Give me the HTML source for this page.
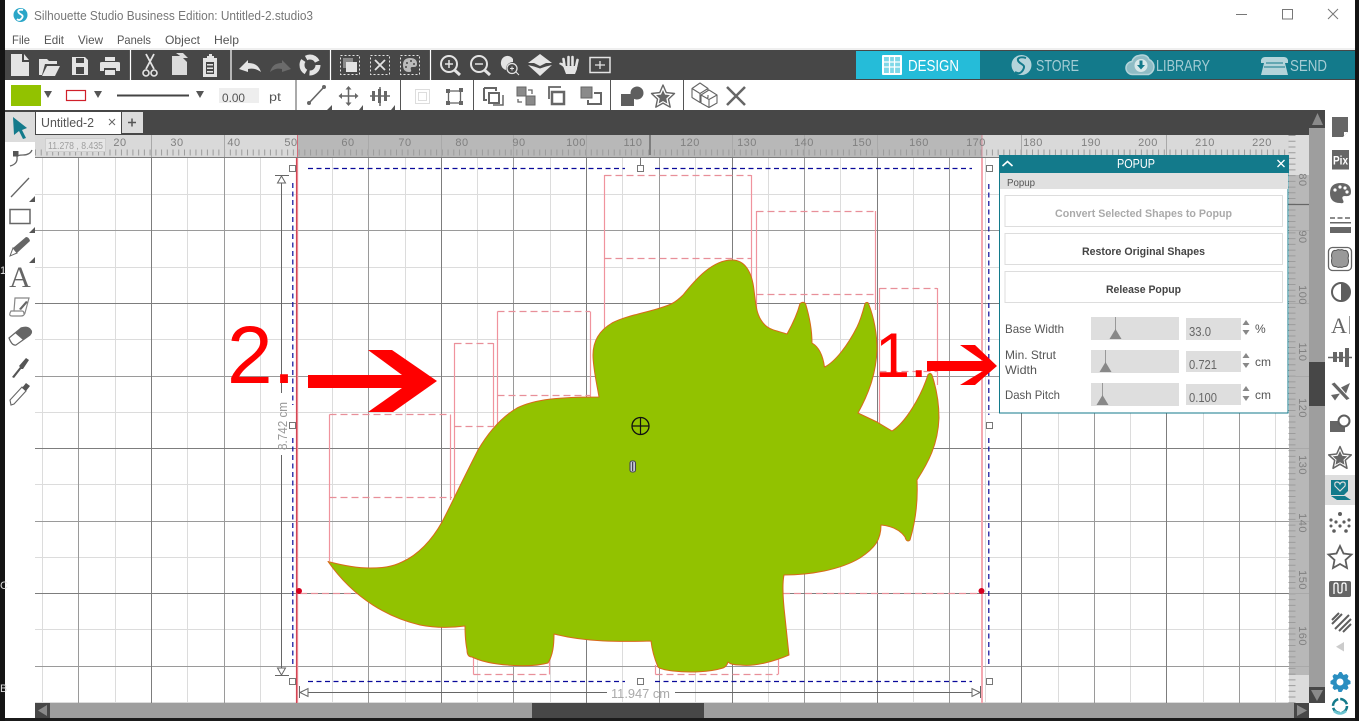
<!DOCTYPE html>
<html><head><meta charset="utf-8"><title>Silhouette Studio</title>
<style>html,body{margin:0;padding:0;background:#fff;overflow:hidden}svg{display:block}text{font-family:"Liberation Sans",sans-serif}</style></head>
<body>
<svg xmlns="http://www.w3.org/2000/svg" width="1359" height="721" viewBox="0 0 1359 721">
<rect width="1359" height="721" fill="#fff"/>

<!-- canvas grid -->
<g fill="none">
<path stroke="#dcdcdc" d="M42.5 158V703M115.5 158V703M187.5 158V703M260.5 158V703M332.5 158V703M405.5 158V703M477.5 158V703M550.5 158V703M622.5 158V703M695.5 158V703M768.5 158V703M840.5 158V703M913.5 158V703M985.5 158V703M1058.5 158V703M1130.5 158V703M1203.5 158V703M1275.5 158V703M35 194.5H1289M35 267.5H1289M35 339.5H1289M35 412.5H1289M35 484.5H1289M35 557.5H1289M35 629.5H1289M35 702.5H1289"/>
<path stroke="#9a9a9a" d="M78.5 158V703M224.5 158V703M368.5 158V703M513.5 158V703M659.5 158V703M804.5 158V703M949.5 158V703M1094.5 158V703M1239.5 158V703M35 230.5H1289M35 376.5H1289M35 521.5H1289M35 666.5H1289"/>
<path stroke="#7d7d7d" d="M151.5 158V703M296.5 158V703M441.5 158V703M586.5 158V703M732.5 158V703M877.5 158V703M1021.5 158V703M1166.5 158V703M35 303.5H1289M35 448.5H1289M35 593.5H1289"/>
</g>

<!-- popup struts -->
<g fill="none" stroke="#f0939d" stroke-width="1.2">
<path d="M329.5 561V414.5M450.5 414.5V500M454.5 343V498M493.5 343V427M497.5 311.5V425M590.5 311.5V397M604.5 175V330M751.5 175V300M756.5 211V330M875.5 211V310M879.5 288V425M937.5 288V385M473.5 655V674.5M549.5 660V674.5M655.5 665V674.5M778.5 655V674.5"/>
<path stroke-dasharray="7 4" stroke="#e88f99" d="M329.5 414.5H450M329.5 497.5H452M454.5 343.5H493M454.5 426.5H493M497.5 311.5H590M497.5 395.5H590M604.5 175.5H751M604.5 258.5H751M756.5 211.5H875M756.5 294.5H875M879.5 288.5H937M879.5 371.5H937M473.5 674.5H549M655.5 674.5H778M300 593.5H410M783 593.5H980"/>
<path stroke-width="2" stroke="#f4a8b0" d="M982 158V703"/>
</g>
<path stroke="#f4a8b0" stroke-width="2.400" fill="none" d="M297 158V703"/>
<path stroke="#cf3a4a" stroke-width="1.200" fill="none" d="M296.700 158V703"/>

<!-- blue selection -->
<g fill="none" stroke="#0a0a9a" stroke-width="1.2" stroke-dasharray="5 3.5">
<path d="M308 168.5H625M655 168.5H972M308 681.5H625M655 681.5H972M292.8 183V405M292.8 438V664M988.8 184V415M988.8 438V664"/>
</g>
<g fill="#fff" stroke="#777">
<rect x="289.5" y="165.5" width="6" height="6"/><rect x="637.5" y="165.5" width="6" height="6"/><rect x="986.5" y="165.5" width="6" height="6"/>
<rect x="289.500" y="422.5" width="6" height="6"/><rect x="986.5" y="422.5" width="6" height="6"/>
<rect x="289.5" y="678.5" width="6" height="6"/><rect x="637.5" y="678.5" width="6" height="6"/><rect x="986.5" y="678.5" width="6" height="6"/>
</g>
<path d="M640.5 157V165" stroke="#777"/>

<!-- dimensions -->
<g fill="none" stroke="#666">
<path d="M281.5 182V393M281.5 455V668M275 175.5H289M275 675.5H289M299.5 686V698M980.5 686V698M308 692.5H607M675 692.5H972"/>
<path fill="#fff" d="M281.5 176l-4 7h8zM281.5 675l-4-7h8zM300 692.5l8-4v8zM980 692.5l-8-4v8z"/>
</g>
<text x="0" y="0" transform="translate(287,426) rotate(-90)" text-anchor="middle" font-size="12.500" fill="#999" textLength="48" lengthAdjust="spacingAndGlyphs">8.742 cm</text>
<text x="611" y="698" font-size="13" fill="#aaa" textLength="59" lengthAdjust="spacingAndGlyphs">11.947 cm</text>

<!-- dinosaur -->
<path fill="#92c200" stroke="#d8691a" stroke-width="1" stroke-linejoin="round" d="M328 561.5C345 566 358 568 370 568C382 568 392 567 402 562C418 555 432 540 442 522C450 507 460 485 478 450C488 433 500 418 517 408C535 399 560 397 599 397C597 385 593 368 593 355C593 340 600 330 612 323C625 316 645 313 660 308C670 305 675 303 683 295C695 280 712 260 732 260C745 260 752 272 754 290C756 305 756 316 765 325C770 330 778 331 787 334C792 325 797 315 800 303.5C802 302 804 302 805.5 303.5C809 315 812 328 812 343C819 347 823 356 824.5 367C835 362 848 345 857 327C861 319 863 311 865 303.5C866 302 868 302 868.5 303.5C875 320 877 335 877 350C876 375 868 395 858 413L877 422L892 431C905 423 921 397 928 374.5C930 373 931 373 932 375C937 390 939 403 939 418C938 445 928 463 917 480C918 500 916 520 910 540C908 542 906 541 905 537C900 530 892 526 881 525C881 540 875 548 860 558C840 570 810 575 784 575C782 585 783 600 785 617L789 655C775 661 755 667 740 665C735 665 730 664 728 662C727 666 725 667 723 668C710 672 690 673 673 671C665 670 660 669 658 667C655 660 652 650 651 641C620 642 585 642 554 634C554 645 553 655 548 663C530 668 490 666 472 657C469 657 467 655 467 650C465 640 465 632 465 626C450 628 435 628 420 625C390 618 355 600 328 561.5Z"/>
<circle cx="640.5" cy="426" r="8.5" fill="none" stroke="#111" stroke-width="1.3"/><path d="M632 426H649M640.5 417.5V434.5" stroke="#111" stroke-width="1.2"/>
<rect x="630" y="461" width="5.5" height="11" rx="2" fill="#ccd" stroke="#445" stroke-width="1.1"/><path d="M632.7 462V471" stroke="#223"/>
<circle cx="299" cy="591" r="3" fill="#d5001f"/><circle cx="981.5" cy="591" r="3" fill="#d5001f"/>

<!-- rulers -->
<rect x="35" y="135" width="263" height="22" fill="#d9d9d9"/>
<rect x="298" y="135" width="684" height="22" fill="#b8b8b8"/>
<rect x="982" y="135" width="307" height="22" fill="#d9d9d9"/>
<rect x="35" y="157" width="1254" height="1" fill="#7d7d7d"/>
<path d="M35 152.5H1289" stroke="#9c9c9c" stroke-width="6" stroke-dasharray="1 4.73" fill="none"/>
<path d="M151.5 135V157M224.5 135V157M368.5 135V157M441.5 135V157M513.5 135V157M586.5 135V157M732.5 135V157M804.5 135V157M877.5 135V157M1021.5 135V157M1166.5 135V157" stroke="#a9a9a9"/>
<path d="M650 135V155" stroke="#666" stroke-width="1.4"/><path d="M297.5 135V157" stroke="#d56a78"/><path d="M982 135V157" stroke="#d58a98"/>
<rect x="45.5" y="138.5" width="60" height="13" fill="#e6e6e6" stroke="#cfcfcf"/>
<text x="48" y="149" font-size="10" fill="#a0a0a0" textLength="55" lengthAdjust="spacingAndGlyphs">11.278 , 8.435</text>
<g font-size="11" fill="#808080" text-anchor="middle" letter-spacing=".5">
<text x="120" y="146">20</text><text x="177" y="146">30</text><text x="234" y="146">40</text><text x="291" y="146">50</text><text x="348" y="146">60</text><text x="405" y="146">70</text><text x="462" y="146">80</text><text x="519" y="146">90</text><text x="576" y="146">100</text><text x="633" y="146">110</text><text x="690" y="146">120</text><text x="747" y="146">130</text><text x="804" y="146">140</text><text x="862" y="146">150</text><text x="919" y="146">160</text><text x="976" y="146">170</text><text x="1033" y="146">180</text><text x="1091" y="146">190</text><text x="1148" y="146">200</text><text x="1205" y="146">210</text><text x="1262" y="146">220</text>
</g>
<rect x="1289" y="135" width="20" height="40" fill="#dcdcdc"/>
<rect x="1289" y="175" width="20" height="500" fill="#b8b8b8"/>
<rect x="1289" y="675" width="20" height="28" fill="#dcdcdc"/>
<path d="M1292 135V703" stroke="#9c9c9c" stroke-width="7" stroke-dasharray="1 4.73" fill="none"/>
<path d="M1288 204.5H1309" stroke="#666" stroke-width="1.3"/>
<path d="M1289 230.5H1309M1289 303.5H1309M1289 376.5H1309M1289 448.5H1309M1289 521.5H1309M1289 593.5H1309M1289 666.5H1309" stroke="#a9a9a9"/>
<g font-size="11" fill="#808080" text-anchor="middle" letter-spacing=".5">
<text transform="translate(1299,180) rotate(90)">80</text><text transform="translate(1299,237) rotate(90)">90</text><text transform="translate(1299,295) rotate(90)">100</text><text transform="translate(1299,352) rotate(90)">110</text><text transform="translate(1299,408) rotate(90)">120</text><text transform="translate(1299,465) rotate(90)">130</text><text transform="translate(1299,523) rotate(90)">140</text><text transform="translate(1299,580) rotate(90)">150</text><text transform="translate(1299,636) rotate(90)">160</text>
</g>

<!-- window chrome -->
<rect y="48" x="0" width="1359" height="2" fill="#efefef"/>
<rect x="0" y="50" width="1359" height="30" fill="#474747"/>
<rect x="0" y="80" width="1359" height="30" fill="#fff"/>
<rect x="0" y="110" width="1325" height="25" fill="#474747"/>

<!-- scrollbars -->
<rect x="1309" y="128" width="16" height="575" fill="#9e9e9e"/>
<rect x="1309" y="362" width="16" height="44" fill="#474747"/>
<rect x="1309" y="687" width="16" height="16" fill="#474747"/><path d="M1311 690h12l-6 11z" fill="#8a8a8a"/>
<rect x="35" y="703" width="1259" height="15" fill="#9e9e9e"/>
<rect x="532" y="703" width="172" height="15" fill="#474747"/>
<rect x="35" y="703" width="15" height="15" fill="#474747"/><path d="M47 705v11l-9-5.500z" fill="#8a8a8a"/>
<rect x="1294" y="703" width="15" height="15" fill="#474747"/><path d="M1297 705v11l10-5.500z" fill="#8a8a8a"/>
<rect x="1309" y="703" width="16" height="15" fill="#fff"/>

<rect x="5" y="112" width="30" height="596" fill="#fff"/>
<rect x="5" y="112" width="30" height="30" fill="#dcdcdc"/>
<rect x="36" y="112" width="85" height="22" fill="#fff"/>
<rect x="122" y="112" width="21" height="21" fill="#dcdcdc"/>
<rect x="1325" y="110" width="30" height="608" fill="#fff"/>
<rect x="0" y="718" width="1359" height="3" fill="#1b1b1b"/>
<rect x="5" y="708" width="30" height="10" fill="#fff"/>
<rect x="0" y="0" width="5" height="721" fill="#141414"/>
<rect x="1355" y="0" width="4" height="721" fill="#141414"/>
<g font-size="11" fill="#ddd"><text x="0" y="274" textLength="4">1.</text><text x="0" y="589">C</text><text x="0" y="692">B</text></g>

<!-- title -->
<circle cx="20.500" cy="15" r="7" fill="#2aa6c8"/><path d="M23 10c-4-1-6 1-4 3s5 2 3 5-4 2-5 1" fill="none" stroke="#fff" stroke-width="1.800"/>
<text x="34" y="20" font-size="13" fill="#777" textLength="279" lengthAdjust="spacingAndGlyphs">Silhouette Studio Business Edition: Untitled-2.studio3</text>
<path d="M1236 14.500h11" stroke="#777"/><rect x="1282.500" y="9.500" width="10" height="9.500" fill="none" stroke="#777"/><path d="M1328 9l10 10M1338 9l-10 10" stroke="#777"/>
<g font-size="12" fill="#555">
<text x="12" y="44" textLength="18" lengthAdjust="spacingAndGlyphs">File</text><text x="44" y="44" textLength="20" lengthAdjust="spacingAndGlyphs">Edit</text><text x="78" y="44" textLength="25" lengthAdjust="spacingAndGlyphs">View</text><text x="117" y="44" textLength="34" lengthAdjust="spacingAndGlyphs">Panels</text><text x="165" y="44" textLength="35" lengthAdjust="spacingAndGlyphs">Object</text><text x="214" y="44" textLength="25" lengthAdjust="spacingAndGlyphs">Help</text>
</g>

<!-- nav -->
<rect x="856" y="51" width="499" height="28" fill="#137a8b"/>
<rect x="856" y="51" width="124" height="28" fill="#25bcd9"/>
<rect x="882" y="55" width="20" height="20" rx="1" fill="#fff"/><path d="M884 57h16v16h-16z" fill="#7fd8e8"/><path d="M889.500 57v16M894.500 57v16M884 62h16M884 67h16" stroke="#fff" stroke-width="1.200"/>
<text x="908" y="71" font-size="16" fill="#fff" textLength="51" lengthAdjust="spacingAndGlyphs">DESIGN</text>
<circle cx="1021.500" cy="65" r="10" fill="#b4d4da"/><path d="M1026 58c-7-2-10 1-7 4s7 3 4 8-6 3-8 2" fill="none" stroke="#137a8b" stroke-width="2"/>
<text x="1036" y="71" font-size="16" fill="#a4ccd4" textLength="43" lengthAdjust="spacingAndGlyphs">STORE</text>
<path d="M1133 74.500a6.500 6.500 0 0 1-1-13 8 8 0 0 1 7-6c5-1.500 9 .5 10 4a8 8 0 0 1-.5 15z" fill="#8fbcc5" stroke="#b4d4da" stroke-width="1.500"/><circle cx="1141" cy="65.500" r="6.500" fill="#d8e8ea"/><path d="M1139.500 60.500h3v4.500h2.500l-4 4.500-4-4.500h2.500z" fill="#137a8b"/>
<text x="1156" y="71" font-size="16" fill="#a4ccd4" textLength="54" lengthAdjust="spacingAndGlyphs">LIBRARY</text>
<path d="M1261 60q1-3 4-3h19q3 0 4 3v3h-3l3 12h-27l3-12h-3z" fill="#b4d4da"/><path d="M1266 63h17M1264 67h21" stroke="#137a8b"/>
<text x="1290" y="71" font-size="16" fill="#a4ccd4" textLength="37" lengthAdjust="spacingAndGlyphs">SEND</text>

<!-- toolbar 1 -->
<path d="M130.500 50v30M231 50v30M330.500 50v30M430.500 50v30" stroke="#fff" stroke-width="1.200"/>
<g fill="#e4e4e4">
<path d="M11 54h11v8h7v14H11zM24 54l5 6h-5z"/>
<path d="M39 59h8l2 2h8v3H45l-3 11h-3zM47 66h13l-5 10H42z"/>
<path fill-rule="evenodd" d="M72 57h13l3 3v15H72zM76 58v5h8v-5zM76 67v7h8v-7z"/>
<path d="M105 57h10v4h-10zM100 63q0-1 2-1h16q2 0 2 1v8h-4v-3h-12v3h-4zM105 70h10v5h-10z"/>
<path d="M172 56h9l6 6v13h-15z M176 53h7l5 5h-5z" opacity=".95"/>
<path fill-rule="evenodd" d="M203 58h4v-2h2v-2h3v2h2v2h3v19h-14zM206 62v12h8V62z"/><path d="M207 64h6v1.500h-6zM207 67.500h6V69h-6zM207 71h6v1.500h-6z"/>
<path d="M239 69l9-9v3c7 0 11 3 13 9-4-3-8-4-13-3v3z"/>
<path d="M291 69l-9-9v3c-7 0-10 3-12 9 4-3 7-4 12-3v3z" fill="#6b6b6b"/>
<path d="M528 63l12-9 12 9h-6l-6 3-6-3zM528 65l6 1.500 6 2 6-2 6-1.500-12 11z"/>
<path d="M564 68q-1-2-5-4l1-1.500 4 1zM563 66h14v3l-2 5h-9z"/>
</g>
<g fill="none" stroke="#e4e4e4" stroke-linecap="round" stroke-width="2.600"><path d="M564.500 66l-1-7M568.500 65v-8M572.500 65v-8M576 67l1.500-7"/></g>
<g fill="none" stroke="#e4e4e4">
<path stroke-width="1.800" d="M146 54l8 15M154 54l-8 15"/><circle cx="146" cy="73" r="3" stroke-width="1.600"/><circle cx="154" cy="73" r="3" stroke-width="1.600"/>
<circle cx="310" cy="65" r="8" stroke-width="5" stroke-dasharray="13 3.700"/>
<g stroke-dasharray="2 2"><rect x="340.500" y="55.500" width="19" height="19"/><rect x="370.500" y="55.500" width="19" height="19"/><rect x="400.500" y="55.500" width="19" height="19"/></g>
<path stroke-width="1.800" d="M375 60l10 10M385 60l-10 10"/>
<circle cx="449" cy="64" r="8" stroke-width="2"/><path stroke-width="3" d="M454.500 70l5.500 5"/><path stroke-width="1.500" d="M445 64h8M449 60v8"/>
<circle cx="479" cy="64" r="8" stroke-width="2"/><path stroke-width="3" d="M484.500 70l5.500 5"/><path stroke-width="1.500" d="M475 64h8"/>
<circle cx="512" cy="68.500" r="5" stroke-width="1.300"/><path d="M516 72l3 3M510 68.500h4M512 66.500v4"/>
<rect x="590" y="57.500" width="20" height="15" stroke-width="1.500"/><path stroke-width="1.300" d="M595 65h10M600 61v8"/>
</g>
<path d="M501 62a6.500 6.500 0 0 1 12-3v3a7 7 0 0 0-7 8 7 7 0 0 1-5-8z" fill="#e4e4e4"/>
<path d="M343 58h10v10h-10z" fill="#8a8a8a"/><path d="M346 62h11v10h-11z" fill="#e4e4e4"/>
<path d="M403 65q0-7 7-7 7 0 7 6 0 3-3 3h-2q-2 0-1 3 1 2-2 2-6 0-6-7z" fill="#bbb"/>
<g fill="#474747"><circle cx="407" cy="63" r="1"/><circle cx="411" cy="61" r="1"/><circle cx="414" cy="64" r="1"/><circle cx="406" cy="67" r="1"/></g>

<!-- toolbar 2 -->
<path d="M296 80v30M400.500 80v30M473.500 80v30M610.500 80v30M683.500 80v30" stroke="#555"/>
<rect x="11" y="85" width="30" height="21" fill="#92c200"/>
<path d="M44 91h8l-4 7zM94 91h8l-4 7zM196 91h8l-4 7z" fill="#555"/>
<rect x="66.500" y="90.500" width="19" height="10" fill="#fff" stroke="#d0202a" stroke-width="1.200"/>
<rect x="117" y="94.500" width="72" height="2" fill="#444"/>
<rect x="219" y="88" width="40" height="15" fill="#eee"/>
<text x="222" y="102" font-size="12" fill="#555" textLength="23" lengthAdjust="spacingAndGlyphs">0.00</text>
<text x="269" y="101" font-size="12" fill="#555" textLength="12" lengthAdjust="spacingAndGlyphs">pt</text>
<g fill="none" stroke="#666">
<path stroke-width="1.600" d="M309 103l15-16"/><circle cx="309" cy="103" r="1.500" fill="#666"/><circle cx="324" cy="87" r="1.500" fill="#666"/>
<path stroke-width="1.500" d="M340 96h17M348.500 88v17"/><path fill="#666" stroke="none" d="M348.500 86l-3 3.500h6zM348.500 106l-3-3.500h6zM338.500 96l3.500-3v6zM358.500 96l-3.500-3v6z"/>
<path stroke-width="1.500" d="M370 96h20M380 87v19"/><path stroke="none" fill="#666" d="M372 91h3v10h-3zM378 89h3v14h-3zM384 91h3v10h-3z" />
</g>
<path d="M327 110l5-5v5zM359 110l4-5v5zM391 110l4-5v5z" fill="#555"/>
<g fill="none" stroke="#ddd"><rect x="415.500" y="89.500" width="14" height="14"/><rect x="418.500" y="92.500" width="8" height="8"/></g>
<g fill="none" stroke="#666"><rect x="448.500" y="91" width="12" height="12" stroke-width="1.300"/></g>
<path d="M446 89h4v4h-4zM459 88h4v4h-4zM446 101h4v4h-4zM459 101h4v4h-4z" fill="#666"/>
<g fill="none" stroke="#666" stroke-width="2">
<path d="M484 88h12v3M484 88v12h3"/><rect x="489" y="93" width="10" height="10"/><path d="M493 105h10V95" stroke-width="1.500"/>
<rect x="552" y="92" width="12" height="12" stroke-width="2.500"/><path d="M549 99v-12h12" stroke-width="1.800"/>
<path d="M594 93h7v11h-13v-4"/>
</g>
<path d="M517 87h9v9h-9zM526 96h9v9h-9z" fill="#8a8a8a" stroke="#666"/><path d="M528 90h4v4M522 102h-4v-3" fill="none" stroke="#666" stroke-width="1.300"/>
<rect x="581" y="87" width="11" height="11" fill="#8a8a8a" stroke="#666"/>
<circle cx="637" cy="93" r="6.500" fill="#5e5e5e"/><path d="M621 94h13v12h-13z" fill="#5e5e5e"/>
<path d="M663 85l3.300 7.600 8.200.9-6 5.600 1.700 8.100-7.200-4.100-7.200 4.100 1.700-8.100-6-5.600 8.200-.9z" fill="#fff" stroke="#666" stroke-width="1.400" stroke-linejoin="round"/>
<path d="M663 90l2 4.600 5 .5-3.700 3.400 1 5-4.300-2.500-4.300 2.500 1-5-3.700-3.400 5-.5z" fill="#666"/>
<g fill="#fff" stroke="#666" stroke-width="1.100" stroke-linejoin="round"><path d="M692 88.500l8-5.500 8 5.500v9l-8 5-8-5zM692 88.500l8 5 8-5M700 93.500v9"/><path d="M701 95l8-5 8 5v8l-8 4.500-8-4.500zM701 95l8 4.500 8-4.500M709 99.500v8"/></g>
<path d="M727 87l18 18M745 87l-18 18" stroke="#666" stroke-width="2.500"/>

<!-- tabs -->
<text x="41" y="127" font-size="12.500" fill="#555" textLength="53" lengthAdjust="spacingAndGlyphs">Untitled-2</text>
<path d="M109 119l6 6M115 119l-6 6" stroke="#666"/>
<path d="M128 122.500h8M132 118.500v8" stroke="#555" stroke-width="1.500"/>
<path d="M1312 125h11l-5.500-12z" fill="#8a8a8a"/>

<!-- left tools -->
<path d="M13 117l14 11-5 2 4 8-3 1-4-8-5 4z" fill="#137a8b"/>
<g fill="none" stroke="#666">
<path stroke-width="1.300" d="M10 166q8-2 7-9 0-2 6-2 7 0 9-5"/><rect x="13" y="151" width="5.500" height="5.500" fill="#555" stroke="none"/>
<path stroke-width="1.300" d="M11 197l18-19"/>
<rect x="10" y="209.500" width="20" height="14" stroke-width="1.500"/>
</g>
<path d="M35 196v6h-6zM35 227v6h-6zM35 257v6h-6z" fill="#555"/>
<path d="M10 256l3-8 13-11q3 0 4 4l-13 12z" fill="#666"/><path d="M10 256l3-8 4 5z" fill="#fff" stroke="#666"/>
<text x="20" y="287" font-size="30" fill="#666" text-anchor="middle" style="font-family:'Liberation Serif',serif">A</text>
<g fill="none" stroke="#888" stroke-width="1.200"><path d="M15 298h14l-4 15q-1 3-4 3H12q-3 0-2-3l1-2h3z"/><path d="M14 311h8q2 0 2 3"/></g><path d="M19 309l7-8 2 1-7 8z" fill="#666"/>
<path d="M9 338l12-10q6-2 9 1t0 6l-14 10q-4 1-7-7z" fill="#fff" stroke="#666" stroke-width="1.200"/><path d="M15 333l6-5q6-2 9 1t0 6l-7 5z" fill="#666"/>
<path d="M12 377l8-10-1-1 7-8 3 2-6 9-2 0-7 9z" fill="#555"/>
<path d="M11 405l-1-5 12-13 4 4-12 13z" fill="#fff" stroke="#666" stroke-width="1.100"/><path d="M22 388l4-5 4 3-4 5z" fill="#555"/>

<!-- right tools -->
<g fill="#666">
<path d="M1332 117h16v15l-5 5h-11z"/><path d="M1344 136l4-4h-4z" fill="#fff"/>
<rect x="1332" y="150" width="17" height="19.500"/>
<text x="1340.500" y="164.500" font-size="12" fill="#fff" font-weight="bold" text-anchor="middle" textLength="15" lengthAdjust="spacingAndGlyphs">Pix</text>
<path d="M1330 193q0-10 11-10 10 0 10 9 0 5-6 4-4 0-2 4t-3 3q-10 0-10-10z"/>
<rect x="1330" y="222" width="21" height="1.500"/><rect x="1330" y="227" width="21" height="6"/>
<path d="M1333 352h4v10h-4zM1339 352h4v10h-4zM1345 348h4v19h-4z"/>
<path d="M1350 383l-9 4.500 5 6zM1331 395l9-1.500-5 7zM1331.500 384l3-1.500 15 16-3 1.500z"/>
<rect x="1330" y="421" width="15" height="11"/>
<rect x="1329" y="581" width="22" height="16" rx="2"/>
</g>
<path d="M1330 218h21" stroke="#666" stroke-width="1.500" stroke-dasharray="5 2.500"/>
<g fill="#fff"><circle cx="1335" cy="190" r="1.600"/><circle cx="1340" cy="187" r="1.600"/><circle cx="1345" cy="188" r="1.600"/><circle cx="1347" cy="192" r="1.600"/></g>
<rect x="1328.500" y="247.500" width="23" height="23" rx="4" fill="none" stroke="#666" stroke-width="1.300"/>
<path d="M1332 253q1-3 4-2.500 2-1.500 4-.5 2-1 4 .5 3-.5 4 2.500 1 3 0 5 1 3 0 6-1 3-4 2.500-2 1.500-4 .5-2 1-4-.5-3 .5-4-2.500-1-3 0-6-1-2 0-5z" fill="#999" stroke="#555" stroke-width="1"/>
<circle cx="1341" cy="292" r="9" fill="none" stroke="#5e5e5e" stroke-width="2"/><path d="M1341 283a9 9 0 0 1 0 18z" fill="#5e5e5e"/>
<text x="1331" y="333" font-size="22" fill="#666" style="font-family:'Liberation Serif',serif">A</text><path d="M1349.500 316v18" stroke="#999"/>
<path d="M1328 357.500h24" stroke="#666" stroke-width="1.500"/>
<circle cx="1344" cy="421" r="5.500" fill="#fff" stroke="#5e5e5e" stroke-width="2"/>
<path d="M1340 446.500l3.300 7.500 8 .9-6 5.400 1.700 8-7-4.100-7 4.100 1.700-8-6-5.400 8-.9z" fill="#fff" stroke="#666" stroke-width="1.500" stroke-linejoin="round"/>
<path d="M1340 451l2.200 4.800 5 .6-3.700 3.400 1 5-4.500-2.500-4.500 2.500 1-5-3.700-3.400 5-.6z" fill="#666"/>
<rect x="1325" y="475" width="30" height="30" fill="#dedede"/>
<path d="M1331 480h17v11l-4 4h-13z" fill="#137a8b"/><path d="M1331 496h14l6 4h-14z" fill="#137a8b"/>
<path d="M1340 491l-5-5q-1-4 2-4 2 0 3 2 1-2 3-2 3 0 2 4z" fill="none" stroke="#dedede" stroke-width="1.200"/>
<g fill="#5e5e5e"><circle cx="1340" cy="514" r="2"/><circle cx="1331" cy="520" r="1.600"/><circle cx="1349" cy="520" r="1.600"/><circle cx="1336" cy="522" r="1.600"/><circle cx="1344" cy="522" r="1.600"/><circle cx="1340" cy="526" r="1.600"/><circle cx="1334" cy="531" r="1.800"/><circle cx="1346" cy="531" r="1.800"/><circle cx="1331" cy="526" r="1.500"/><circle cx="1349" cy="526" r="1.500"/></g>
<path d="M1340 546l3.500 7.500 8 1-6 5.500 1.500 8-7-4-7 4 1.500-8-6-5.500 8-1z" fill="#fff" stroke="#5e5e5e" stroke-width="1.800"/>
<path d="M1334 594v-9q0-2 2-2t2 2v6q0 2 2 2t2-2v-6q0-2 2-2t2 2v6" fill="none" stroke="#fff" stroke-width="1.300"/>
<path d="M1332 624l10-10M1335 629l14-14M1339 631l12-12M1332 620l7-7M1343 632l8-8" stroke="#5e5e5e" stroke-width="2"/>
<path d="M1344 642v9.500l-8-4.750z" fill="#ccc"/>
<path d="M1340 672l2 3 3-1 2 2-1 3 3 2v3l-3 1 1 3-2 2-3-1-2 3h-3l-1-3-3 1-2-2 1-3-3-1v-3l3-2-1-3 2-2 3 1 2-3z" fill="#2a8ec0" transform="translate(1.500,0)"/><circle cx="1340" cy="682" r="3.500" fill="#fff"/>
<circle cx="1340" cy="706" r="7" fill="none" stroke="#137a8b" stroke-width="2.500" stroke-dasharray="9 2"/><path d="M1334 711q6 5 12 0" fill="none" stroke="#6cc4d0" stroke-width="2.500"/>

<!-- big annotations -->
<text x="227" y="383" font-size="82" fill="#ff0000">2.</text>
<path fill="#ff0000" d="M308 375H402L368 350H392L437 381L393 412H368L402 388H308Z"/>
<text x="875" y="377" font-size="63" fill="#ff0000">1.</text>

<!-- popup panel -->
<rect x="999.500" y="155.500" width="288.500" height="257.500" fill="#fff" stroke="#137a8b"/>
<rect x="999" y="155" width="290" height="18" fill="#137a8b"/>
<path d="M1002.500 166l5-4.500 5 4.500" fill="none" stroke="#fff" stroke-width="1.600"/>
<path d="M1277.500 160l7 7M1284.500 160l-7 7" stroke="#fff" stroke-width="1.300"/>
<text x="1117" y="168" font-size="12.500" fill="#fff" textLength="38" lengthAdjust="spacingAndGlyphs">POPUP</text>
<rect x="1000" y="173" width="288" height="16" fill="#e0e0e0"/>
<text x="1007" y="186" font-size="10.500" fill="#555" textLength="28" lengthAdjust="spacingAndGlyphs">Popup</text>
<g fill="#fff" stroke="#ddd"><rect x="1005" y="195.500" width="277.500" height="31"/><rect x="1005" y="233.500" width="277.500" height="31"/><rect x="1005" y="271.500" width="277.500" height="31"/></g>
<g font-size="11" font-weight="bold">
<text x="1055" y="217" fill="#aaa" textLength="177" lengthAdjust="spacingAndGlyphs">Convert Selected Shapes to Popup</text>
<text x="1082" y="255" fill="#444" textLength="123" lengthAdjust="spacingAndGlyphs">Restore Original Shapes</text>
<text x="1106" y="293" fill="#444" textLength="75" lengthAdjust="spacingAndGlyphs">Release Popup</text>
</g>
<g font-size="12" fill="#555">
<text x="1005" y="333" textLength="59" lengthAdjust="spacingAndGlyphs">Base Width</text>
<text x="1005" y="359" textLength="51" lengthAdjust="spacingAndGlyphs">Min. Strut</text>
<text x="1005" y="374" textLength="32" lengthAdjust="spacingAndGlyphs">Width</text>
<text x="1005" y="399" textLength="55" lengthAdjust="spacingAndGlyphs">Dash Pitch</text>
<text x="1255" y="333" textLength="10">%</text><text x="1255" y="366" textLength="16">cm</text><text x="1255" y="399" textLength="16">cm</text>
</g>
<g fill="#dedede"><rect x="1091" y="317" width="88" height="23"/><rect x="1091" y="350" width="88" height="23"/><rect x="1091" y="383" width="88" height="23"/>
<rect x="1186" y="318" width="55" height="22"/><rect x="1186" y="351" width="55" height="21"/><rect x="1186" y="384" width="55" height="21"/></g>
<g font-size="13" fill="#666"><text x="1189" y="336" textLength="22" lengthAdjust="spacingAndGlyphs">33.0</text><text x="1189" y="369" textLength="28" lengthAdjust="spacingAndGlyphs">0.721</text><text x="1189" y="402" textLength="28" lengthAdjust="spacingAndGlyphs">0.100</text></g>
<g fill="#888"><path d="M1115.500 317v13" stroke="#999"/><path d="M1115.500 329l6 10h-12z"/><path d="M1105.500 350v13" stroke="#999"/><path d="M1105.500 362l6 10h-12z"/><path d="M1102.500 383v13" stroke="#999"/><path d="M1102.500 395l6 10h-12z"/>
<path d="M1246 320l3.500 5h-7zM1246 335l3.500-5h-7zM1246 353l3.500 5h-7zM1246 368l3.500-5h-7zM1246 386l3.500 5h-7zM1246 401l3.500-5h-7z"/></g>

<!-- arrow 1 over panel -->
<path fill="#ff0000" d="M927 361H983L960 345H975L997 366L975 385H960L983 371H927Z"/>
</svg>
</body></html>
